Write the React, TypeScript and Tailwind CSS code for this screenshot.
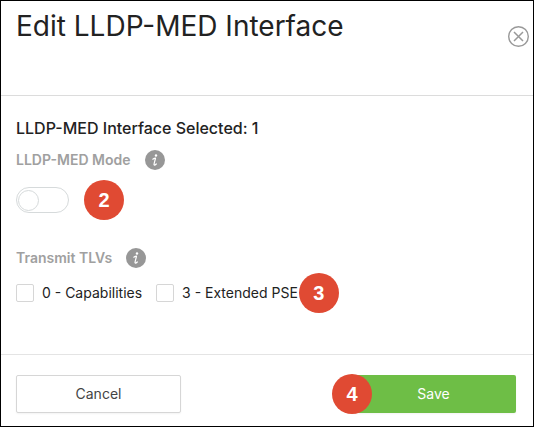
import { useState } from "react";
import type { ReactNode } from "react";

function Marker({ children, className = "" }: { children: ReactNode; className?: string }) {
  return (
    <span
      className={`flex size-10 shrink-0 items-center justify-center rounded-full bg-[#e04a33] font-['Liberation_Sans',sans-serif] text-xl font-bold text-white ${className}`}
    >
      {children}
    </span>
  );
}

function InfoButton({ label }: { label: string }) {
  return (
    <button type="button" aria-label={label} className="size-5 shrink-0">
      <svg viewBox="0 0 20 20" className="size-5" aria-hidden="true">
        <circle cx="10" cy="10" r="10" fill="#979797" />
        <circle cx="11" cy="5.5" r="1.2" fill="#fff" />
        <path
          d="M7.800 9.200c.9-.6 1.700-1 2.700-1-.3 1.900-1.500 4.900-1.500 6.400 0 1 1.300.5 2.300-.6"
          fill="none"
          stroke="#fff"
          strokeWidth="1.200"
          strokeLinecap="round"
          strokeLinejoin="round"
        />
      </svg>
    </button>
  );
}

function TlvOption({ label }: { label: string }) {
  return (
    <label className="flex items-center gap-2 text-sm text-[#222]">
      <input
        type="checkbox"
        className="size-[18px] shrink-0 appearance-none rounded-xs border border-[#d6d6d6] bg-white checked:bg-[#6ebe46]"
      />
      {label}
    </label>
  );
}

export default function App() {
  const [enabled, setEnabled] = useState(false);

  return (
    <main className="border border-black bg-white font-['Inter',sans-serif] text-[#222]">
      <header className="flex items-start justify-between border-b border-[#dcdcdc] pr-1 pb-12 pl-[15px]">
        <h1 className="pt-[5px] text-[28px] leading-10">Edit LLDP-MED Interface</h1>
        <button type="button" aria-label="Close" className="mt-6 size-[22px] shrink-0">
          <svg viewBox="0 0 22 22" className="size-[22px]" fill="none" stroke="#999" aria-hidden="true">
            <circle cx="11.500" cy="11.500" r="9.800" strokeWidth="1.400" />
            <path d="M7 7l9 9M16 7l-9 9" strokeWidth="1.500" />
          </svg>
        </button>
      </header>

      <form>
        <div className="px-[15px] pt-5 pb-[41px]">
          <h2 className="text-base leading-6 font-medium">LLDP-MED Interface Selected: 1</h2>

          <div className="mt-[10px] flex items-center gap-[14px]">
            <span id="mode" className="text-sm leading-5 font-semibold text-[#a0a0a0]">
              LLDP-MED Mode
            </span>
            <InfoButton label="About LLDP-MED Mode" />
          </div>
          <div className="mt-[10px] flex items-center gap-[15px]">
            <button
              type="button"
              role="switch"
              aria-checked={enabled}
              aria-labelledby="mode"
              onClick={() => setEnabled(!enabled)}
              className="flex h-[26px] w-[53px] items-center rounded-full border border-[#d6dadb] px-px aria-checked:justify-end"
            >
              <span className="size-[21px] rounded-full border border-[#d6dadb] bg-white" />
            </button>
            <Marker>2</Marker>
          </div>

          <fieldset>
            <legend className="flex items-center gap-[14px] pt-7">
              <span className="text-sm leading-5 font-semibold text-[#a0a0a0]">Transmit TLVs</span>
              <InfoButton label="About Transmit TLVs" />
            </legend>
            <div className="mt-[5px] flex items-center gap-px">
              <div className="flex items-center gap-[14px]">
                <TlvOption label="0 - Capabilities" />
                <TlvOption label="3 - Extended PSE" />
              </div>
              <Marker>3</Marker>
            </div>
          </fieldset>
        </div>

        <footer className="flex justify-between border-t border-[#e4e4e4] pt-5 pr-[17px] pb-[13px] pl-[15px]">
          <button
            type="button"
            className="h-[38px] w-[165px] rounded-xs border border-[#d6d6d6] bg-white text-sm text-[#444] shadow-xs"
          >
            Cancel
          </button>
          <div className="relative">
            <button type="submit" className="h-[38px] w-[165px] rounded-xs bg-[#6ebe46] text-sm text-white shadow-xs">
              Save
            </button>
            <Marker className="absolute -top-px -left-[19px]">4</Marker>
          </div>
        </footer>
      </form>
    </main>
  );
}
